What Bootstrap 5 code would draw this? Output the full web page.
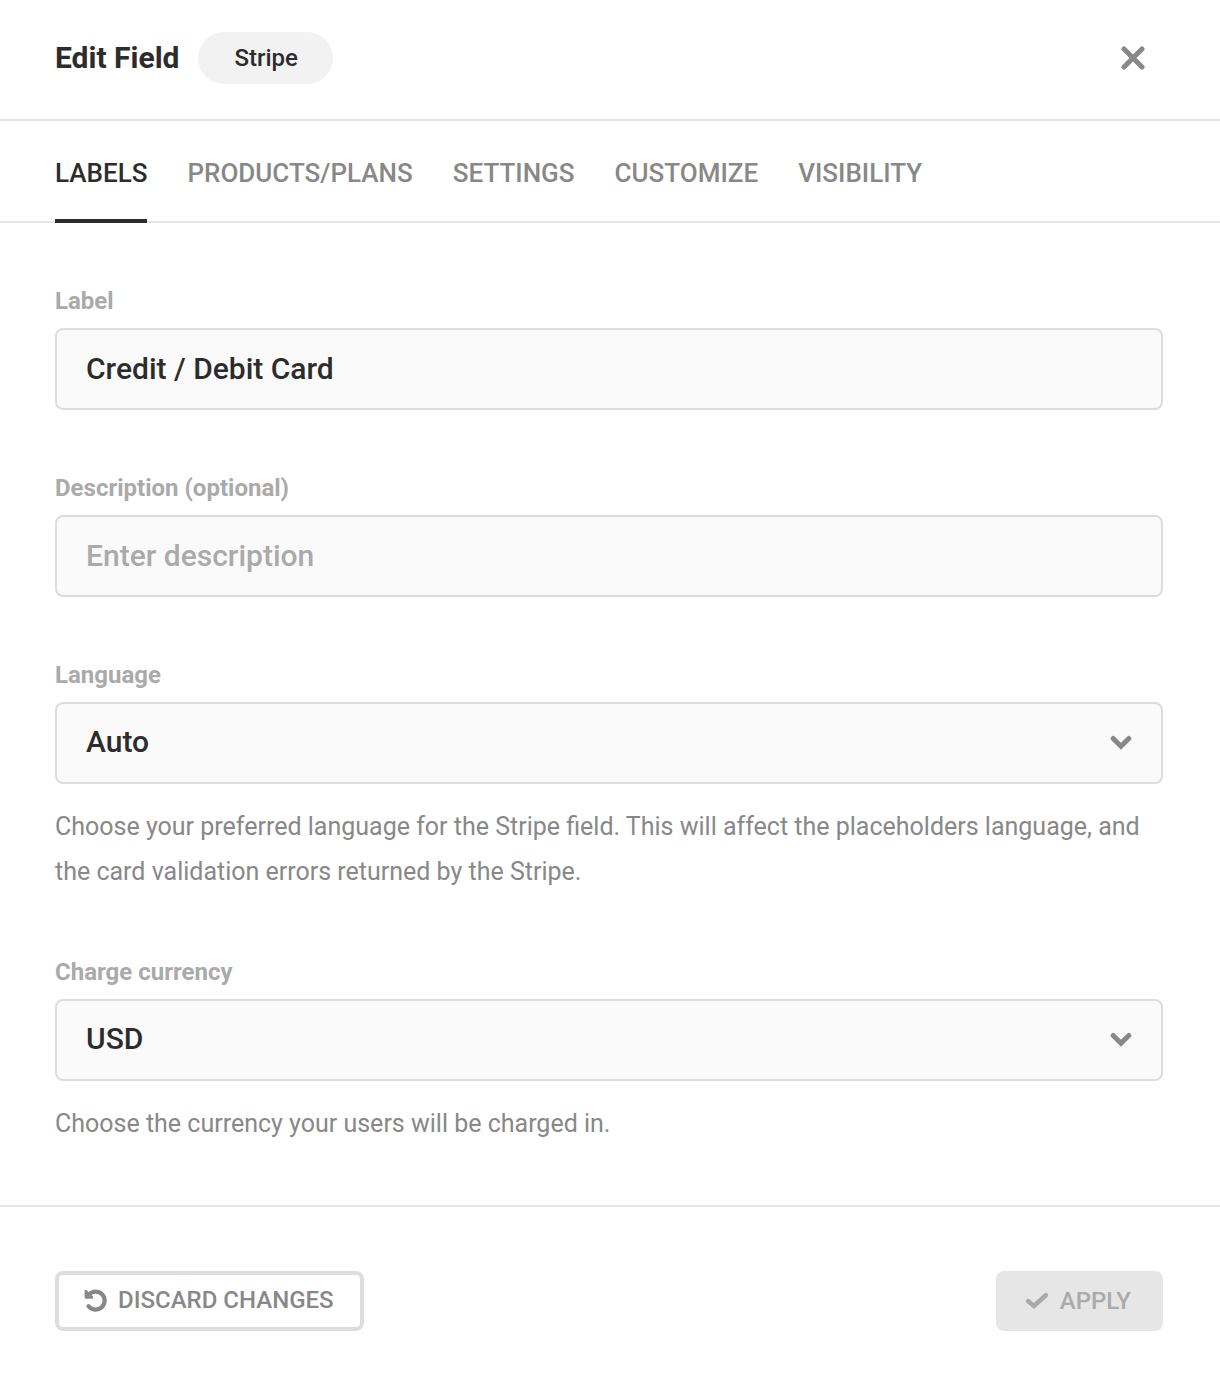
<!DOCTYPE html>
<html lang="en">
<head>
<meta charset="utf-8">
<meta name="viewport" content="width=device-width, initial-scale=1">
<title>Edit Field</title>
<link href="https://cdn.jsdelivr.net/npm/bootstrap@5.3.0/dist/css/bootstrap.min.css" rel="stylesheet">
<style>
  :root { --ink: #2c2c2c; --muted: #888; --soft: #aaa; --line: #e6e6e6; --edge: #ddd; --gutter: 55px; }
  body { font-family: Roboto, "Liberation Sans", sans-serif; color: var(--ink); background: #fff; }
  .gutter { padding-left: var(--gutter); padding-right: 57px; }
  .dialog-head { height: 121px; padding-bottom: 4px; border-bottom: 2px solid var(--line); }
  .dialog-title { font-size: 30px; line-height: 40px; font-weight: 700; margin: 0 19px 0 0; }
  .field-type { background: #f2f2f2; color: var(--ink); font-size: 24px; line-height: 52px; font-weight: 500; padding: 0 35px 0 36px; border-radius: 26px; }
  .close-btn { color: var(--muted); padding: 10px; margin-right: 8px; line-height: 0; }
  .tab-bar { gap: 40px; height: 102px; border-bottom: 2px solid var(--line); }
  .tab-bar .nav-link { color: var(--muted); font-size: 26px; line-height: 40px; font-weight: 500; padding: 32px 0 26px; margin-bottom: -2px; border-bottom: 4px solid transparent; border-radius: 0; text-transform: uppercase; }
  .tab-bar .nav-link.active { color: var(--ink); border-bottom-color: var(--ink); }
  .fields { padding-top: 63px; padding-bottom: 59px; gap: 63px; }
  .form-label { color: var(--soft); font-size: 24px; line-height: 30px; font-weight: 700; margin-bottom: 12px; display: block; }
  .form-control, .form-select { height: 82px; background-color: #fafafa; border: 2px solid var(--edge); border-radius: 8px; color: var(--ink); font-size: 30px; line-height: 40px; font-weight: 500; padding: 0 29px 2px; }
  .form-select { background-image: none; }
  .form-control::placeholder { color: var(--soft); opacity: 1; }
  .chevron { position: absolute; right: 31px; top: 33px; color: var(--muted); pointer-events: none; }
  .form-text { color: var(--muted); font-size: 25px; line-height: 45px; margin: 20px 0 0; }
  .dialog-foot { border-top: 2px solid var(--line); padding-top: 64px; padding-bottom: 56px; }
  .action { display: flex; align-items: center; height: 60px; border-radius: 8px; font-size: 24px; line-height: 30px; font-weight: 500; text-transform: uppercase; }
  .action-ghost { border: 4px solid var(--edge); color: var(--muted); padding: 0 26px 2px 25px; gap: 10px; }
  .action-apply, .action-apply:disabled { background: var(--line); color: var(--soft); border: 0; opacity: 1; padding: 0 32px 0 29px; gap: 11px; }
</style>
<script src="https://cdn.jsdelivr.net/npm/bootstrap@5.3.0/dist/js/bootstrap.bundle.min.js"></script>
</head>
<body>
<main>
  <header class="dialog-head gutter d-flex align-items-center">
    <h1 class="dialog-title">Edit Field</h1>
    <span class="field-type">Stripe</span>
    <button type="button" class="btn close-btn ms-auto border-0" aria-label="Close">
      <svg width="24" height="24" viewBox="0 0 24 24" fill="none" stroke="currentColor" stroke-width="5" stroke-linecap="round" aria-hidden="true"><path d="M3 3 21 21M21 3 3 21"/></svg>
    </button>
  </header>

  <nav class="nav tab-bar gutter flex-nowrap" aria-label="Field options">
    <a class="nav-link active" aria-current="page" href="#labels">Labels</a>
    <a class="nav-link" href="#products">Products/Plans</a>
    <a class="nav-link" href="#settings">Settings</a>
    <a class="nav-link" href="#customize">Customize</a>
    <a class="nav-link" href="#visibility">Visibility</a>
  </nav>

  <form>
    <div class="fields gutter d-flex flex-column" id="labels">
      <div>
        <label class="form-label" for="field-label">Label</label>
        <input class="form-control" id="field-label" type="text" value="Credit / Debit Card">
      </div>
      <div>
        <label class="form-label" for="field-desc">Description (optional)</label>
        <input class="form-control" id="field-desc" type="text" placeholder="Enter description">
      </div>
      <div>
        <label class="form-label" for="field-lang">Language</label>
        <div class="position-relative">
          <select class="form-select" id="field-lang" aria-describedby="lang-help"><option>Auto</option></select>
          <svg class="chevron" width="22" height="15" viewBox="0 0 22 15" fill="none" stroke="currentColor" stroke-width="5" stroke-linecap="round" aria-hidden="true"><path d="M3.200 3.500 11 11.300 18.800 3.500"/></svg>
        </div>
        <p class="form-text" id="lang-help">Choose your preferred language for the Stripe field. This will affect the placeholders language, and the card validation errors returned by the Stripe.</p>
      </div>
      <div>
        <label class="form-label" for="field-currency">Charge currency</label>
        <div class="position-relative">
          <select class="form-select" id="field-currency" aria-describedby="currency-help"><option>USD</option></select>
          <svg class="chevron" width="22" height="15" viewBox="0 0 22 15" fill="none" stroke="currentColor" stroke-width="5" stroke-linecap="round" aria-hidden="true"><path d="M3.200 3.500 11 11.300 18.800 3.500"/></svg>
        </div>
        <p class="form-text" id="currency-help">Choose the currency your users will be charged in.</p>
      </div>
    </div>

    <footer class="dialog-foot gutter d-flex justify-content-between align-items-center">
      <button type="button" class="btn action action-ghost">
        <svg width="24" height="24" viewBox="0 0 24 24" fill="none" aria-hidden="true"><path d="M5 6.500A9 9 0 1 1 4.600 18.200" stroke="currentColor" stroke-width="4.200" stroke-linecap="round"/><path d="M1.400 2H2.600L5 4.400 8.800 8.200Q9.600 10.800 8 10.800H1.800Q.6 10.800.6 9.600V2.800Q.6 2 1.400 2Z" fill="currentColor"/></svg>
        Discard changes
      </button>
      <button type="submit" class="btn action action-apply" disabled>
        <svg width="24" height="18" viewBox="0 0 24 18" fill="none" stroke="currentColor" stroke-width="4.600" stroke-linecap="round" aria-hidden="true"><path d="M3.200 9.200 9 14 20.800 3.200"/></svg>
        Apply
      </button>
    </footer>
  </form>
</main>
</body>
</html>
